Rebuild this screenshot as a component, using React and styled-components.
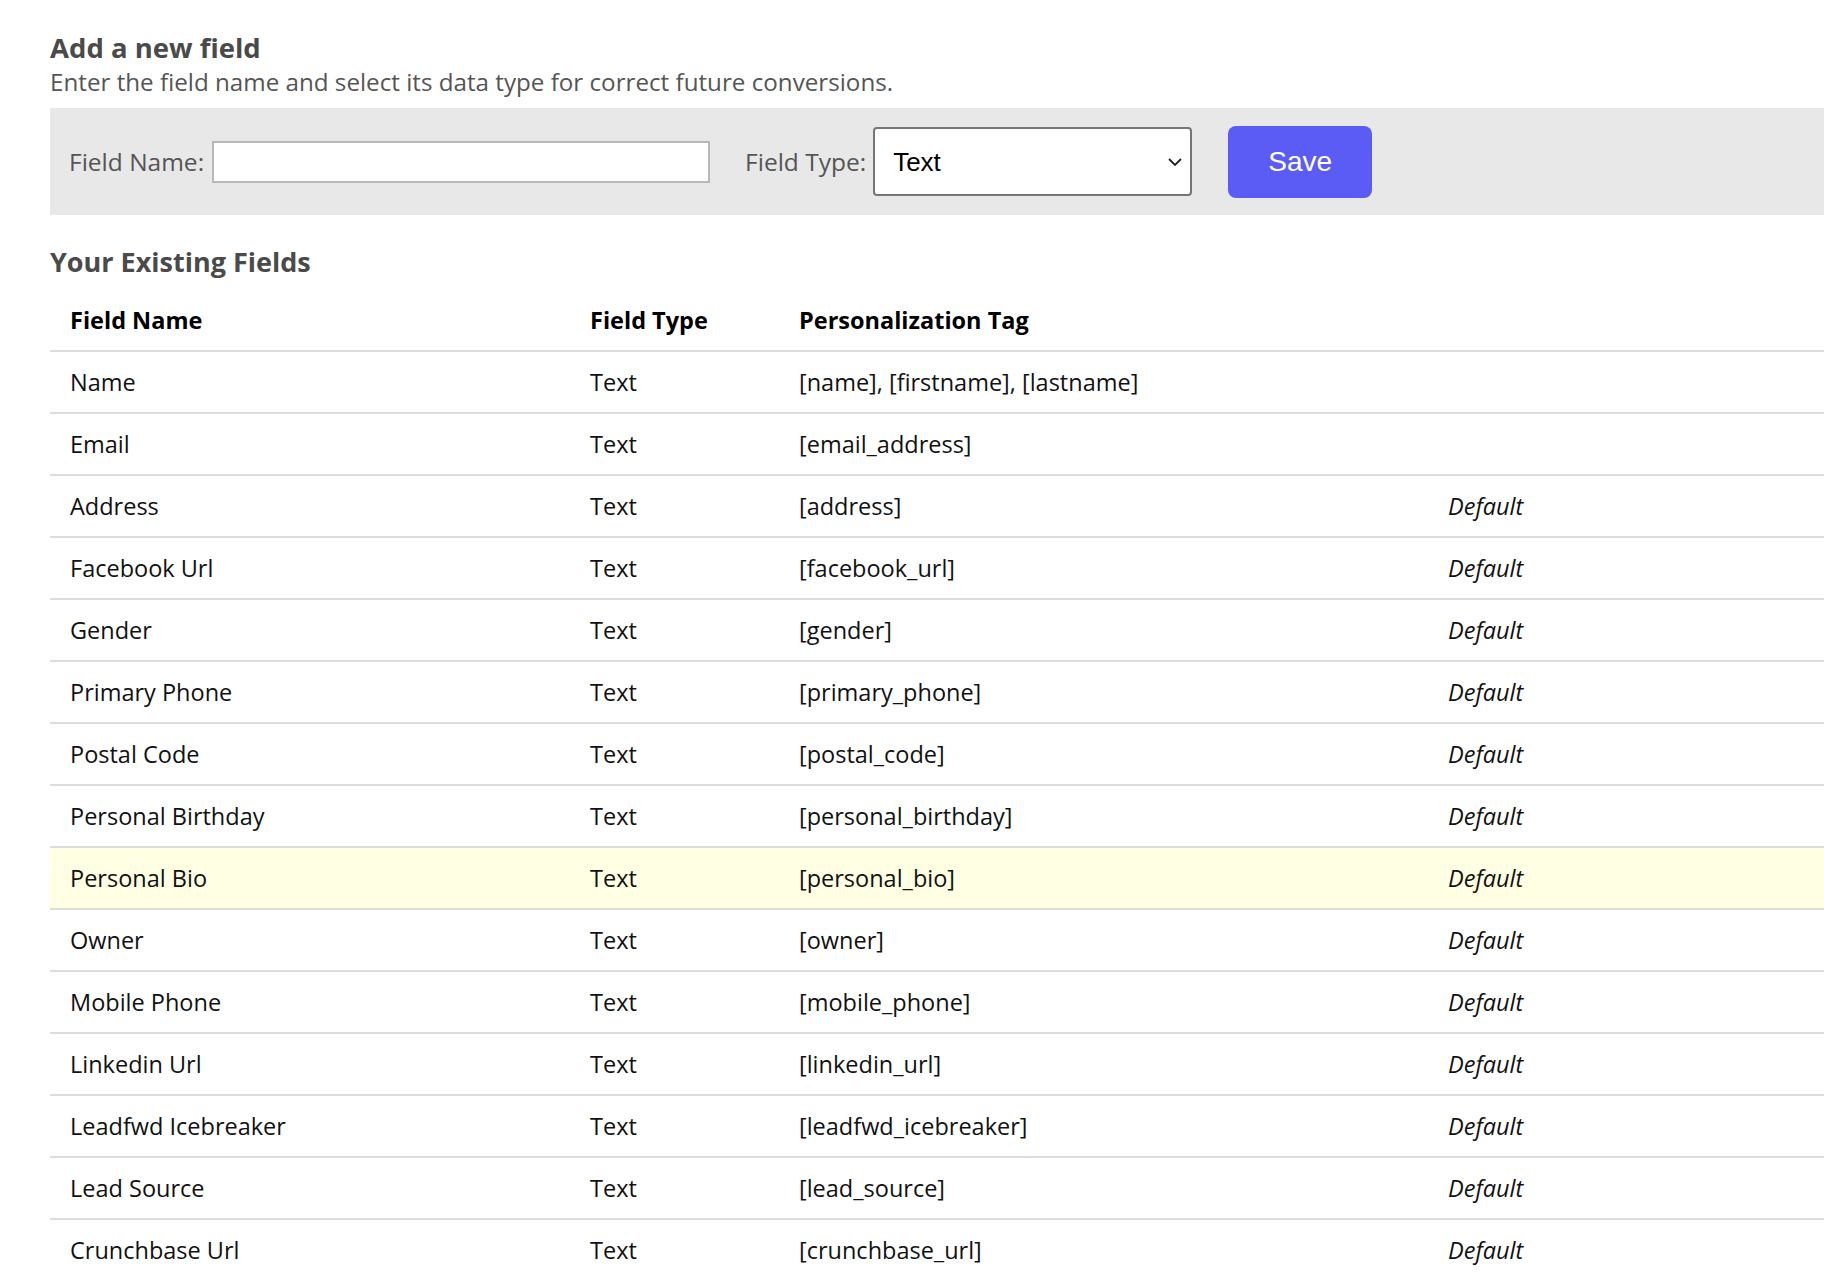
import React from "react";
import styled, { createGlobalStyle } from "styled-components";

/**
 * =Styles
 ******************************/

const GlobalStyle = createGlobalStyle`
	html, body {
		margin: 0;
		padding: 0;
		background: #fff;
	}

	body {
		font-family: "Open Sans", Lato, sans-serif;
		color: #111;
	}
`;

const Page = styled.main`
	padding: 31px 0 0 50px;
	overflow: hidden;
`;

const Title = styled.h1`
	margin: 0;
	font-size: 27.5px;
	line-height: 1.2;
	font-weight: 700;
	color: #4a4a4a;
`;

const Subtitle = styled.p`
	margin: 3px 0 0;
	font-size: 24.2px;
	line-height: 1.2;
	color: #555;
`;

const FormBar = styled.form`
	display: flex;
	align-items: center;
	height: 107px;
	margin-top: 12px;
	padding-left: 19px;
	background: #e8e8e8;
`;

const Label = styled.label`
	font-size: 24.5px;
	color: #555;
	margin-right: ${(p) => p.$gap || 8}px;
	margin-left: ${(p) => p.$offset || 0}px;
`;

const TextInput = styled.input`
	box-sizing: border-box;
	width: 498px;
	height: 42px;
	border: 2px solid #b8b8b8;
	background: #fff;
	padding: 0 8px;
	font-size: 22px;
`;

const SelectWrap = styled.div`
	position: relative;
	width: 319px;
	height: 69px;

	svg {
		position: absolute;
		right: 9px;
		top: 50%;
		transform: translateY(-50%);
		pointer-events: none;
	}
`;

const Select = styled.select`
	box-sizing: border-box;
	width: 100%;
	height: 100%;
	appearance: none;
	border: 2px solid #767676;
	border-radius: 4px;
	background: #fff;
	padding: 0 40px 0 18px;
	font-family: "Liberation Sans", Arial, sans-serif;
	font-size: 26px;
	color: #000;
`;

const SaveButton = styled.button`
	width: 144px;
	height: 72px;
	margin-left: 36px;
	border: none;
	border-radius: 8px;
	background: #5b5cf6;
	color: #fff;
	font-family: "Liberation Sans", Arial, sans-serif;
	font-size: 28px;
	cursor: pointer;
`;

const SectionTitle = styled.h2`
	margin: 31px 0 12px;
	font-size: 27px;
	line-height: 1.2;
	font-weight: 700;
	color: #4a4a4a;
`;

const Table = styled.table`
	width: 100%;
	border-collapse: collapse;
	table-layout: fixed;
	font-size: 23.5px;
`;

const HeadCell = styled.th`
	height: 60px;
	padding: 0 0 0 20px;
	text-align: left;
	font-weight: 700;
	color: #000;
	border-bottom: 2px solid #dcdcdc;
	width: ${(p) => (p.$w ? `${p.$w}px` : "auto")};
`;

const Row = styled.tr`
	background: ${(p) => (p.$highlight ? "#ffffe3" : "transparent")};
`;

const Cell = styled.td`
	height: 60px;
	padding: 0 0 0 20px;
	color: #111;
	border-bottom: 2px solid #dcdcdc;
	font-style: ${(p) => (p.$italic ? "italic" : "normal")};
	white-space: nowrap;
`;

/**
 * =Data
 ******************************/

const FIELDS = [
	{ name: "Name", tag: "[name], [firstname], [lastname]", def: false },
	{ name: "Email", tag: "[email_address]", def: false },
	{ name: "Address", tag: "[address]", def: true },
	{ name: "Facebook Url", tag: "[facebook_url]", def: true },
	{ name: "Gender", tag: "[gender]", def: true },
	{ name: "Primary Phone", tag: "[primary_phone]", def: true },
	{ name: "Postal Code", tag: "[postal_code]", def: true },
	{ name: "Personal Birthday", tag: "[personal_birthday]", def: true },
	{ name: "Personal Bio", tag: "[personal_bio]", def: true, highlight: true },
	{ name: "Owner", tag: "[owner]", def: true },
	{ name: "Mobile Phone", tag: "[mobile_phone]", def: true },
	{ name: "Linkedin Url", tag: "[linkedin_url]", def: true },
	{ name: "Leadfwd Icebreaker", tag: "[leadfwd_icebreaker]", def: true },
	{ name: "Lead Source", tag: "[lead_source]", def: true },
	{ name: "Crunchbase Url", tag: "[crunchbase_url]", def: true }
];

/**
 * =Component
 ******************************/

export default function App() {
	return (
		<Page>
			<GlobalStyle />

			<Title>Add a new field</Title>
			<Subtitle>
				Enter the field name and select its data type for correct future
				conversions.
			</Subtitle>

			<FormBar onSubmit={(e) => e.preventDefault()}>
				<Label htmlFor="field-name">Field Name:</Label>
				<TextInput id="field-name" type="text" />

				<Label htmlFor="field-type" $offset={35} $gap={7}>
					Field Type:
				</Label>
				<SelectWrap>
					<Select id="field-type" defaultValue="text">
						<option value="text">Text</option>
						<option value="number">Number</option>
						<option value="date">Date</option>
					</Select>
					<svg width="16" height="10" viewBox="0 0 16 10">
						<path
							d="M 2,2 L 8,8 L 14,2"
							fill="none"
							stroke="#222"
							strokeWidth="1.8"
						/>
					</svg>
				</SelectWrap>

				<SaveButton type="submit">Save</SaveButton>
			</FormBar>

			<SectionTitle>Your Existing Fields</SectionTitle>

			<Table>
				<thead>
					<tr>
						<HeadCell $w={500}>Field Name</HeadCell>
						<HeadCell $w={189}>Field Type</HeadCell>
						<HeadCell $w={629}>Personalization Tag</HeadCell>
						<HeadCell></HeadCell>
					</tr>
				</thead>
				<tbody>
					{FIELDS.map((f) => (
						<Row key={f.name} $highlight={f.highlight}>
							<Cell>{f.name}</Cell>
							<Cell>Text</Cell>
							<Cell>{f.tag}</Cell>
							<Cell $italic>{f.def ? "Default" : ""}</Cell>
						</Row>
					))}
				</tbody>
			</Table>
		</Page>
	);
}
